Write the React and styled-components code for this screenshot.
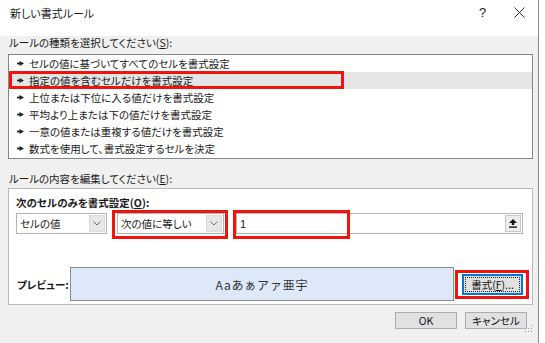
import React from 'react';
import styled, { createGlobalStyle } from 'styled-components';

const GlobalStyle = createGlobalStyle`
  body {
    margin: 0;
    background: #fff;
    font-family: "Noto Sans CJK JP", "Noto Sans", sans-serif;
    font-feature-settings: "palt";
    color: #1a1a1a;
  }
`;

const Window = styled.div`
  width: 538px;
  border-right: 1px solid #8a8a8a;
  background: #fff;
`;

const TitleBar = styled.div`
  height: 25px;
  display: flex;
  align-items: center;
  padding-left: 10px;
  font-size: 11px;
  background: #fff;
`;

const Title = styled.div`
  flex: 1;
`;

const TitleButton = styled.div`
  width: 37px;
  display: flex;
  justify-content: center;
  align-items: center;
  font-family: "Liberation Sans", sans-serif;
  font-size: 13px;
  color: #222;
`;

const Body = styled.div`
  background: #f0f0f0;
  padding: 0 5px 10px 8px;
  border-bottom: 1px solid #4a4a4a;
  height: 302px;
`;

const Label = styled.div`
  font-size: 10.5px;
  line-height: 14px;
  height: 14px;
  margin-top: ${p => p.top}px;
  margin-left: 1px;
`;

const U = styled.span`
  text-decoration: underline;
  text-underline-offset: 1px;
`;

const ListBox = styled.div`
  margin-top: 4px;
  background: #fff;
  border: 1px solid #828790;
  padding-bottom: 1px;
`;

const Item = styled.div`
  position: relative;
  height: 17px;
  display: flex;
  align-items: center;
  gap: 5px;
  padding-left: 8px;
  font-size: 10.5px;
  background: ${p => (p.selected ? '#e5e5e5' : 'transparent')};
  ${p => p.selected && `
    &::after {
      content: '';
      position: absolute;
      left: 0;
      top: -1px;
      width: 335px;
      height: 18px;
      box-sizing: border-box;
      border: 3px solid #f0130e;
    }
  `}
`;

const Arrow = () => (
  <svg width="7" height="5" viewBox="0 0 7 5">
    <rect x="0" y="1.6" width="3" height="1.8" fill="#222" />
    <polygon points="2.5,0 7,2.5 2.5,5" fill="#222" />
  </svg>
);

const Group = styled.div`
  margin-top: 2px;
  background: #fff;
  border: 1px solid #b9b9b9;
  padding: 7px 9px 3px 7px;
`;

const BoldLabel = styled.div`
  font-size: 10.5px;
  font-weight: bold;
  line-height: 14px;
  height: 14px;
`;

const ControlRow = styled.div`
  margin-top: 3px;
  display: flex;
  align-items: center;
  height: 21px;
`;

const Select = styled.div`
  position: relative;
  width: ${p => p.w}px;
  height: 21px;
  box-sizing: border-box;
  margin-left: ${p => p.ml || 0}px;
  border: 1px solid #b4b4b4;
  background: #fff;
  display: flex;
  align-items: center;
  font-size: 10.5px;
`;

const SelectText = styled.div`
  flex: 1;
  padding-left: 3px;
`;

const DropButton = styled.div`
  width: 16px;
  height: 17px;
  margin-right: 1px;
  background: #e6e6e6;
  border: 1px solid #dcdcdc;
  box-sizing: border-box;
  display: flex;
  align-items: center;
  justify-content: center;
`;

const Chevron = () => (
  <svg width="8" height="5" viewBox="0 0 8 5">
    <polyline points="0.5,0.5 4,4 7.5,0.5" fill="none" stroke="#707070" strokeWidth="1" />
  </svg>
);

const RedMark = styled.div`
  position: absolute;
  left: ${p => p.l}px;
  top: ${p => p.t}px;
  width: ${p => p.w}px;
  height: ${p => p.h}px;
  box-sizing: border-box;
  border: 3px solid #f0130e;
  pointer-events: none;
`;

const TextField = styled.div`
  position: relative;
  flex: 1;
  margin-left: 12px;
  height: 21px;
  box-sizing: border-box;
  border: 1px solid #b4b4b4;
  background: #fff;
  display: flex;
  align-items: center;
  font-size: 10.5px;
`;

const FieldValue = styled.div`
  flex: 1;
  padding-left: 3px;
  font-family: "Liberation Sans", sans-serif;
  font-size: 11px;
`;

const PickButton = styled.div`
  width: 16px;
  height: 17px;
  margin-right: 1px;
  background: #ececec;
  border: 1px solid #c8c8c8;
  box-sizing: border-box;
  display: flex;
  align-items: center;
  justify-content: center;
`;

const UpIcon = () => (
  <svg width="8" height="9" viewBox="0 0 8 9">
    <polygon points="4,0 8,4 5.2,4 5.2,6 2.8,6 2.8,4 0,4" fill="#111" />
    <rect x="0" y="7.4" width="8" height="1.4" fill="#111" />
  </svg>
);

const PreviewRow = styled.div`
  margin-top: 33px;
  display: flex;
  align-items: center;
  height: 34px;
`;

const PreviewLabel = styled.div`
  width: 53px;
  font-size: 10.5px;
  font-weight: bold;
  padding-left: 1px;
`;

const PreviewBox = styled.div`
  width: 385px;
  height: 34px;
  box-sizing: border-box;
  border: 1px solid #8e8e8e;
  background: #dde9f8;
  display: flex;
  align-items: center;
  justify-content: center;
  font-size: 12px;
  letter-spacing: 0.8px;
  color: #333;
  font-feature-settings: normal;
`;

const FormatWrap = styled.div`
  position: relative;
  margin-left: 8px;
`;

const Button = styled.div`
  width: ${p => p.w}px;
  height: ${p => p.h}px;
  box-sizing: border-box;
  background: #e1e1e1;
  border: 1px solid ${p => (p.focused ? '#0078d7' : '#adadad')};
  ${p => p.focused && 'box-shadow: inset 0 0 0 1px #0078d7;'}
  display: flex;
  align-items: center;
  justify-content: center;
  font-size: 10.5px;
  color: #111;
`;

const FocusRing = styled.span`
  display: flex;
  align-items: center;
  justify-content: center;
  width: calc(100% - 4px);
  height: calc(100% - 4px);
  outline: 1px dotted #222;
  outline-offset: -1px;
`;

const ButtonRow = styled.div`
  margin-top: 7px;
  display: flex;
  justify-content: flex-end;
  gap: 8px;
  padding-right: 6px;
  position: relative;
`;

const Grip = styled.div`
  position: absolute;
  right: 0;
  bottom: -9px;
`;

const Ticks = styled.div`
  height: 5px;
  margin-left: 13px;
  width: 190px;
  background: repeating-linear-gradient(
    to right,
    #d6d6d6 0 1px,
    transparent 1px 21.3px
  );
`;

const rules = [
  'セルの値に基づいてすべてのセルを書式設定',
  '指定の値を含むセルだけを書式設定',
  '上位または下位に入る値だけを書式設定',
  '平均より上または下の値だけを書式設定',
  '一意の値または重複する値だけを書式設定',
  '数式を使用して、書式設定するセルを決定',
];

export default function App() {
  return (
    <>
      <GlobalStyle />
      <Window>
        <TitleBar>
          <Title>新しい書式ルール</Title>
          <TitleButton>?</TitleButton>
          <TitleButton>
            <svg width="11" height="11" viewBox="0 0 11 11">
              <path d="M0.5 0.5 L10.5 10.5 M10.5 0.5 L0.5 10.5" stroke="#333" strokeWidth="1" />
            </svg>
          </TitleButton>
        </TitleBar>
        <Body>
          <Label top={11}>ルールの種類を選択してください(<U>S</U>):</Label>
          <ListBox>
            {rules.map((r, i) => (
              <Item key={r} selected={i === 1}>
                <Arrow />
                {r}
              </Item>
            ))}
          </ListBox>
          <Label top={13}>ルールの内容を編集してください(<U>E</U>):</Label>
          <Group>
            <BoldLabel>次のセルのみを書式設定(<U>O</U>):</BoldLabel>
            <ControlRow>
              <Select w={91}>
                <SelectText>セルの値</SelectText>
                <DropButton><Chevron /></DropButton>
              </Select>
              <Select w={107} ml={10}>
                <SelectText>次の値に等しい</SelectText>
                <DropButton><Chevron /></DropButton>
                <RedMark l={-6} t={-4} w={116} h={29} />
              </Select>
              <TextField>
                <FieldValue>1</FieldValue>
                <PickButton><UpIcon /></PickButton>
                <RedMark l={-4} t={-4} w={117} h={29} />
              </TextField>
            </ControlRow>
            <PreviewRow>
              <PreviewLabel>プレビュー:</PreviewLabel>
              <PreviewBox>Aaあぁアァ亜宇</PreviewBox>
              <FormatWrap>
                <Button w={61} h={21} focused>
                  <FocusRing>書式(<U>F</U>)...</FocusRing>
                </Button>
                <RedMark l={-7} t={-4} w={74} h={29} />
              </FormatWrap>
            </PreviewRow>
          </Group>
          <ButtonRow>
            <Button w={62} h={17}>OK</Button>
            <Button w={62} h={17}>キャンセル</Button>
            <Grip>
              <svg width="8" height="8" viewBox="0 0 8 8">
                <rect x="6" y="0" width="1" height="1" fill="#999" />
                <rect x="3" y="3" width="1" height="1" fill="#999" />
                <rect x="6" y="3" width="1" height="1" fill="#999" />
                <rect x="0" y="6" width="1" height="1" fill="#999" />
                <rect x="3" y="6" width="1" height="1" fill="#999" />
                <rect x="6" y="6" width="1" height="1" fill="#999" />
              </svg>
            </Grip>
          </ButtonRow>
        </Body>
      </Window>
      <Ticks />
    </>
  );
}
